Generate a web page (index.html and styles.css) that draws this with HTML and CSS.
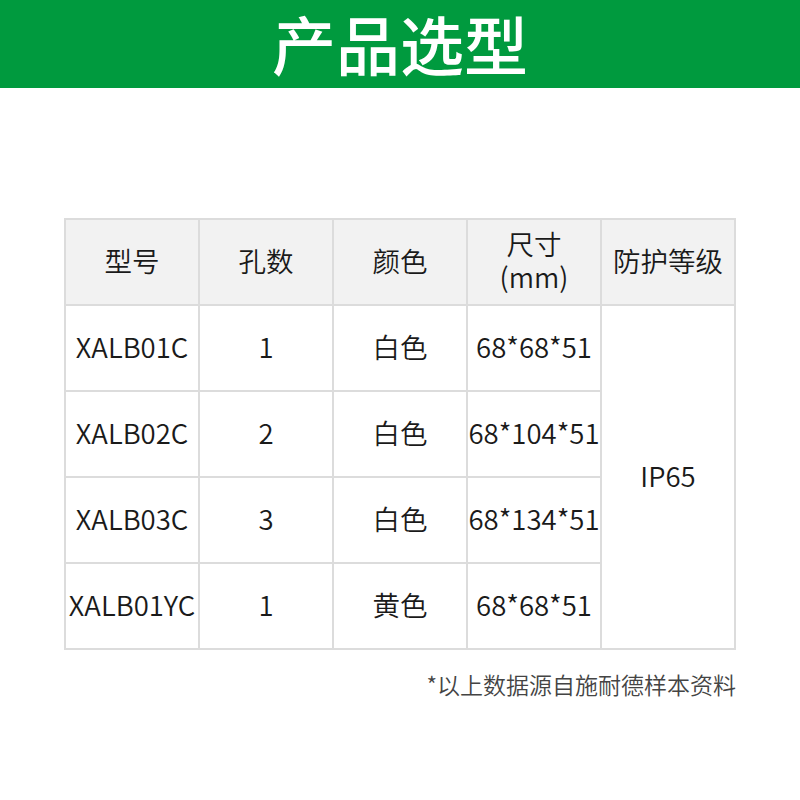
FILE: index.html
```html
<!DOCTYPE html>
<html lang="zh-CN">
<head>
<meta charset="utf-8">
<title>产品选型</title>
<link rel="stylesheet" href="styles.css">
</head>
<body>
<header class="banner"><h1 class="banner-title">产品选型</h1></header>
<main class="content">
<table class="spec">
<thead>
<tr><th>型号</th><th>孔数</th><th>颜色</th><th class="two-line"><span class="line">尺寸</span><span class="line">(mm)</span></th><th>防护等级</th></tr>
</thead>
<tbody>
<tr><td>XALB01C</td><td>1</td><td>白色</td><td>68*68*51</td><td rowspan="4">IP65</td></tr>
<tr><td>XALB02C</td><td>2</td><td>白色</td><td>68*104*51</td></tr>
<tr><td>XALB03C</td><td>3</td><td>白色</td><td>68*134*51</td></tr>
<tr><td>XALB01YC</td><td>1</td><td>黄色</td><td>68*68*51</td></tr>
</tbody>
</table>
<p class="note">*以上数据源自施耐德样本资料</p>
</main>
</body>
</html>
```
FILE: styles.css
```css
html, body {
  margin: 0;
  padding: 0;
  background: #ffffff;
  font-family: "Noto Sans CJK SC", "Noto Sans", sans-serif;
  color: #1a1a1a;
}
.banner {
  height: 88px;
  background: #009a3e;
  display: flex;
  align-items: center;
  justify-content: center;
}
.banner-title {
  margin: 0 0 4px;
  color: #ffffff;
  font-size: 64px;
  font-weight: 500;
  line-height: 72px;
  letter-spacing: 0;
}
.content {
  width: 672px;
  margin: 0 auto;
  padding-top: 130px;
}
.spec {
  width: 672px;
  table-layout: fixed;
  border-collapse: collapse;
}
.spec th, .spec td {
  border: 2px solid #dcdcdc;
  height: 86px;
  padding: 0 0 4px;
  box-sizing: border-box;
  text-align: center;
  vertical-align: middle;
  font-size: 27.5px;
  font-weight: 350;
  line-height: 32px;
  white-space: nowrap;
}
.spec th {
  background: #f2f2f2;
}
.spec th.two-line .line {
  display: block;
  line-height: 33px;
}
.note {
  margin: 18px 0 0;
  text-align: right;
  font-size: 23px;
  font-weight: 350;
  color: #444444;
  line-height: 32px;
}
```
